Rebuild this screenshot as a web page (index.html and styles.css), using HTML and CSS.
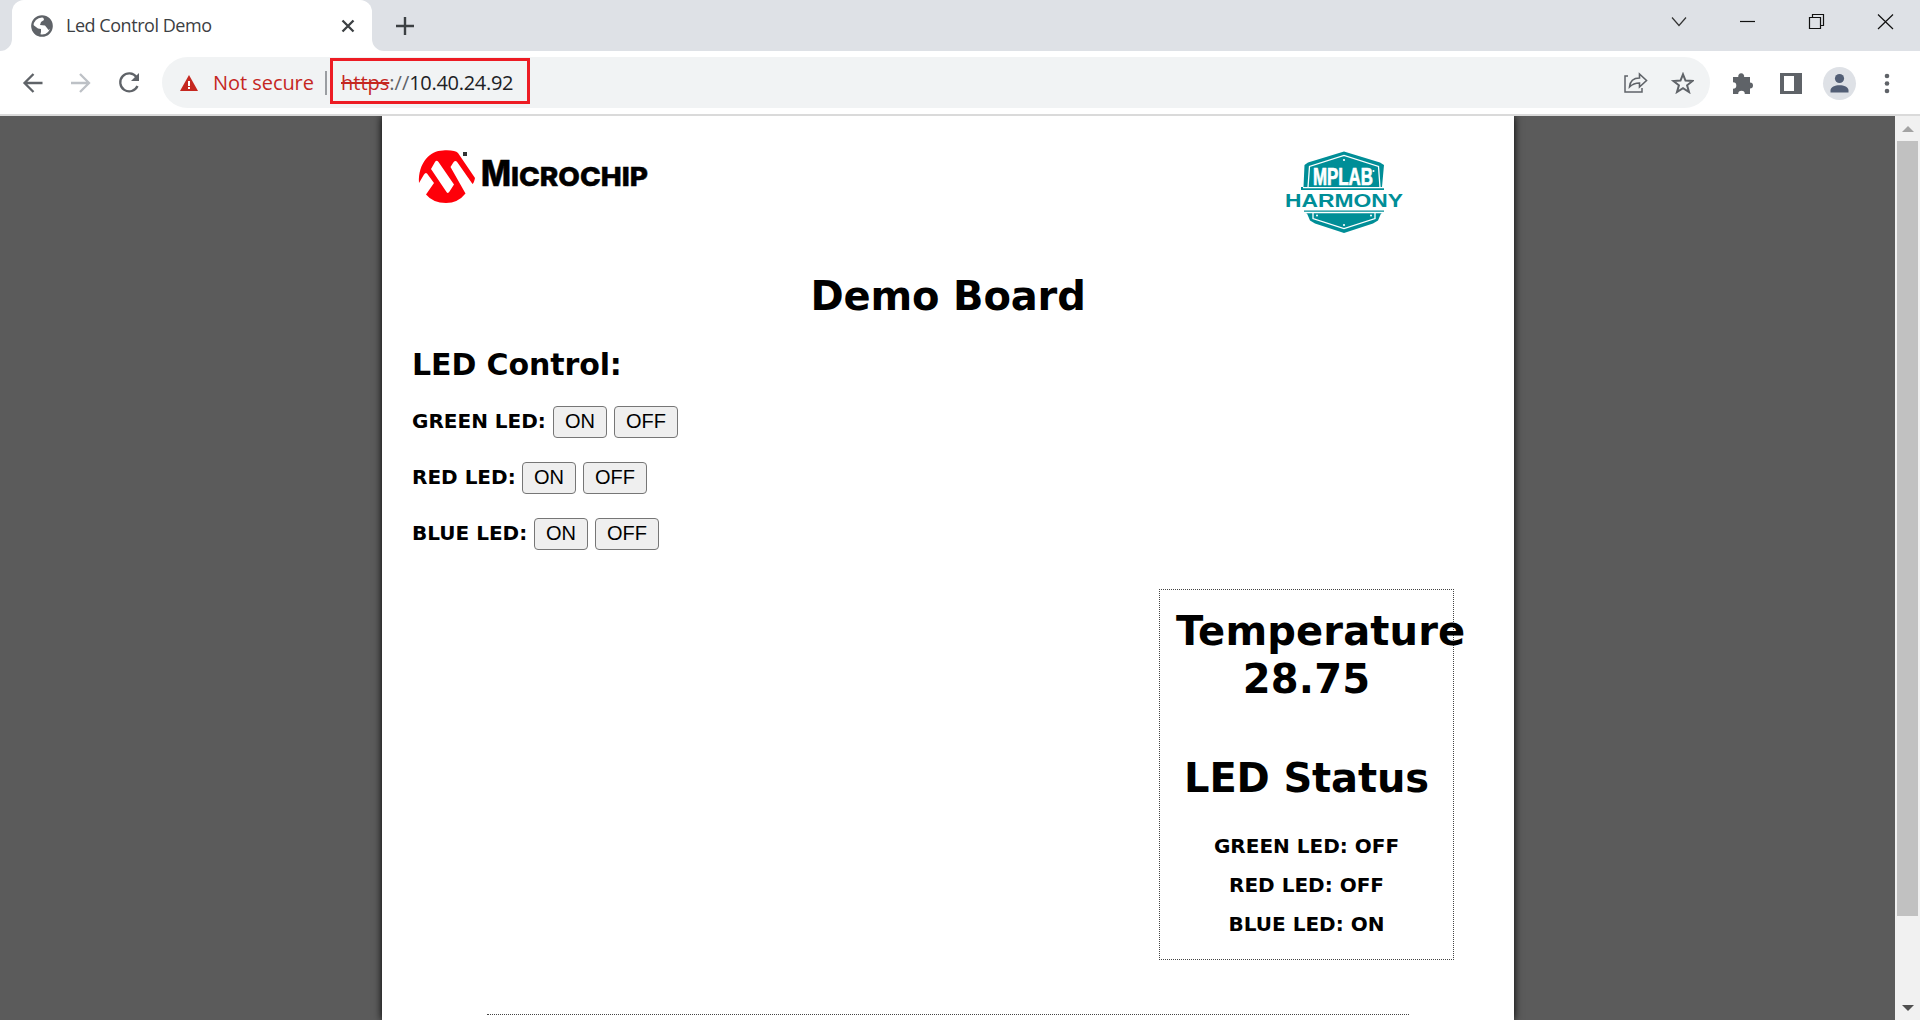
FILE: index.html
```html
<!DOCTYPE html>
<html lang="en">
<head>
<meta charset="utf-8">
<title>Led Control Demo</title>
<link rel="stylesheet" href="styles.css">
</head>
<body>
<div class="browser">
  <header class="tabstrip">
    <svg class="tab-curve left" width="12" height="12" viewBox="0 0 12 12"><path d="M12 0A12 12 0 0 1 0 12H12z" fill="#fff"/></svg>
    <div class="tab">
      <svg class="globe" width="22" height="22" viewBox="0 0 22 22"><circle cx="11" cy="11" r="9.7" fill="#fff" stroke="#5f6368" stroke-width="2.2"/><path d="M1 9 7 13.500 10 14v3l-1 4A10 10 0 0 1 1 9zM12 1.500 13 5l-3 2-1 3 5 .5 2 2.500 1.500 2 3.500-2A10 10 0 0 0 12 1.500z" fill="#5f6368"/></svg>
      <span class="tab-title">Led Control Demo</span>
      <svg class="tab-close" width="14" height="14" viewBox="0 0 14 14"><path d="M1.500 1.500l11 11M12.500 1.500l-11 11" stroke="#3c4043" stroke-width="2.300"/></svg>
    </div>
    <svg class="tab-curve" width="12" height="12" viewBox="0 0 12 12"><path d="M0 0A12 12 0 0 0 12 12H0z" fill="#fff"/></svg>
    <svg class="new-tab" width="18" height="18" viewBox="0 0 18 18"><path d="M9 0v18M0 9h18" stroke="#3c4043" stroke-width="2.400"/></svg>
    <svg class="window-buttons" width="240" height="51" viewBox="0 0 240 51" fill="none" stroke="#111" stroke-width="1.200"><path d="M12 17.500l7 8 7-8" stroke="#333"/><path d="M80 21.500h15"/><path d="M149.500 17.500h11v11h-11zM152.500 17.500v-3h11v11h-3"/><path d="M218 14.500l15 14.500M233 14.500l-15 14.500"/></svg>
  </header>
  <nav class="toolbar">
    <svg class="nav-icons" width="130" height="24" viewBox="0 0 130 24" fill="none" stroke="#5f6368" stroke-width="2.300"><path d="M20.500 12h-18M11.500 3l-9 9 9 9"/><path d="M49 12h18M58 3l9 9-9 9" stroke="#bdc1c6"/><path d="M114.500 6A9 9 0 1 0 115.500 15"/><path d="M117 2v8h-8z" fill="#5f6368" stroke="none"/></svg>
    <div class="omnibox">
      <svg class="warning" width="18" height="16" viewBox="0 0 18 16"><path d="M9 0l9 16H0z" fill="#c5271f"/><path d="M9 6v5M9 12v2" stroke="#fff" stroke-width="2"/></svg>
      <span class="not-secure">Not secure</span>
      <span class="divider"></span>
      <div class="address"><span class="scheme">https</span><span class="slashes">://</span><span class="host">10.40.24.92</span></div>
      <svg class="page-actions" width="70" height="22" viewBox="0 0 70 22" fill="none" stroke="#5f6368"><path d="M4 4H1v16h17v-4" stroke-width="1.500"/><path d="M5.500 15c.5-6 4-9 10-9V2l7 6.500-7 6.500v-4c-4 0-7 1-10 4z" stroke-width="1.600"/><path d="M59 2.300l2.500 6.300 7 .4-5.400 4.300 1.900 6.700-6-3.800-6 3.800 1.900-6.700L49.500 9l7-.4z" stroke-width="2"/></svg>
    </div>
    <svg class="tools" width="180" height="34" viewBox="0 0 180 34"><path d="M3 11h5.300a3 3 0 1 1 5.800 0H20v5.500a3 3 0 1 1 0 6V28h-5.200a3.300 3.300 0 0 0-6.600 0H3v-5.200a3.300 3.300 0 0 0 0-6.600z" fill="#5f6368"/><path d="M50 7h22v21H50zM54 10v15h10V10z" fill="#5f6368" fill-rule="evenodd"/><circle cx="109.500" cy="17.500" r="16.500" fill="#dee1e6"/><circle cx="109.500" cy="12.500" r="4.600" fill="#525e75"/><path d="M100.500 26.500v-2c0-7 18-7 18 0v2z" fill="#525e75"/><g fill="#5f6368"><circle cx="157" cy="10" r="2.300"/><circle cx="157" cy="17.500" r="2.300"/><circle cx="157" cy="25" r="2.300"/></g></svg>
  </nav>
  <div class="viewport">
    <main class="page">
      <div class="logos">
        <svg class="microchip" width="232" height="56" viewBox="417 149 232 56"><path fill-rule="evenodd" fill="#fe0009" d="M419 183C418 163 430 150.500 443 150.500C451 150 456 151 458 153L475 178Q474 183 472.500 184L457.500 162.500Q455 159.500 453 163L450.500 167L465.500 193.500Q458 203 446 203Q433 203 426 194.500L434 183L427 173.500Q425.500 172 424 174.500zM431 169L446.500 192Q448 194 449.500 191.500L454 184.500L438.500 162Q436.500 159.500 435 162z"/><path d="M463 152h4v4h-4z" fill="#333"/><text class="brand" x="481" y="186" font-size="35" textLength="30" lengthAdjust="spacingAndGlyphs">M</text><text class="brand" x="511" y="186" font-size="26" textLength="137" lengthAdjust="spacingAndGlyphs">ICROCHIP</text></svg>
        <svg class="harmony" width="120" height="84" viewBox="1284 151 120 84"><g fill="#008e97"><path d="M1344 151.500L1380 162.500L1384 165L1382 187H1384V190H1301V187H1303.500L1304.500 165L1308 162.500z"/><path d="M1304 210.500h80v2l-3 1-3 7-5 3-29 9.500-29-9.500-5-3-3-7-3-1z"/></g><g fill="none" stroke="#fff" stroke-width="1.300"><path d="M1308 187.500L1309.500 166.500L1344 155.500L1378.500 166.500L1380 187.500"/><path d="M1303 187.700H1385"/><path d="M1304 212.500H1384M1313 213v5.500l31 10 31-10v-5.500"/></g><g fill="#fff"><circle cx="1344" cy="160" r="1.100"/><circle cx="1317" cy="215.500" r="1"/><circle cx="1371" cy="215.500" r="1"/><circle cx="1344" cy="225" r="1.100"/><circle cx="1373.500" cy="171" r="1"/></g><text x="1313" y="185" class="mplab" textLength="60" lengthAdjust="spacingAndGlyphs">MPLAB</text><text x="1285" y="206.500" class="harm" textLength="118" lengthAdjust="spacingAndGlyphs">HARMONY</text></svg>
      </div>
      <h1 class="title">Demo Board</h1>
      <h2 class="subtitle">LED Control:</h2>
      <div class="led"><b>GREEN LED:</b><button>ON</button><button>OFF</button></div>
      <div class="led red"><b>RED LED:</b><button>ON</button><button>OFF</button></div>
      <div class="led blue"><b>BLUE LED:</b><button>ON</button><button>OFF</button></div>
      <section class="status">
        <h1 class="temperature">Temperature<br>28.75</h1>
        <h1 class="led-status">LED Status</h1>
        <p>GREEN LED: OFF</p><p>RED LED: OFF</p><p>BLUE LED: ON</p>
      </section>
      <div class="rule"></div>
    </main>
    <div class="scrollbar"><i class="up"></i><div class="thumb"></div><i class="down"></i></div>
  </div>
</div>
</body>
</html>
```
FILE: styles.css
```css
* { box-sizing: border-box; }
body { margin: 0; overflow: hidden; font-family: "DejaVu Sans", sans-serif; color: #000; }
svg { display: block; flex: none; }
.browser { width: 1920px; height: 1020px; display: flex; flex-direction: column; overflow: hidden; }
.tabstrip { height: 51px; flex: none; background: #dee1e6; display: flex; align-items: center; }
.tab { width: 360px; height: 51px; background: #fff; border-radius: 12px 12px 0 0; display: flex; align-items: center; padding: 0 17px 0 19px; }
.tab-title { margin-left: 13px; flex: 1; font: 18px "Open Sans", sans-serif; padding-bottom: 2px; letter-spacing: -.46px; color: #3c4043; white-space: nowrap; }
.tab-curve { align-self: flex-end; }
.new-tab { margin-left: 12px; }
.window-buttons { margin-left: auto; margin-right: 20px; }
.toolbar { height: 65px; flex: none; background: #fff; border-bottom: 2px solid #dadada; display: flex; align-items: center; }
.nav-icons { margin-left: 22px; }
.omnibox { margin-left: 10px; width: 1548px; height: 51px; border-radius: 26px; background: #f1f3f4; display: flex; align-items: center; font: 20px "Open Sans", sans-serif; }
.warning { margin-left: 18px; }
.not-secure { margin-left: 15px; width: 112px; color: #c5271f; letter-spacing: -.05px; white-space: nowrap; }
.divider { width: 2px; height: 24px; background: #9a9da1; }
.address { margin: 0 0 3px 3px; width: 200px; height: 46px; border: 3px solid #ed1c24; display: flex; align-items: center; padding: 3px 0 0 8px; color: #202124; }
.scheme { color: #c5271f; text-decoration: line-through; }
.slashes { color: #5f6368; }
.host { letter-spacing: -.3px; }
.page-actions { margin-left: auto; margin-right: 16px; }
.tools { margin-left: 20px; }
.viewport { flex: 1; display: flex; background: #5b5b5b; overflow: hidden; }
.page { width: 1132px; margin-left: 382px; height: 904px; background: #fff; box-shadow: 0 0 8px #000; padding: 33px 30px 0; }
.logos { display: flex; justify-content: space-between; padding: 0 80px 0 5px; height: 118px; }
.harmony { margin-top: 2px; }
.brand { font-family: Inter, sans-serif; font-weight: 800; fill: #000; stroke: #000; stroke-width: .5px; }
.mplab { font: bold 23px "Liberation Sans", sans-serif; fill: #fff; stroke: #fff; stroke-width: .7px; }
.harm { font: bold 19px "Liberation Sans", sans-serif; fill: #008e97; }
h1 { font-size: 40px; line-height: 48px; margin: 0; text-align: center; }
.title { margin-top: 5px; letter-spacing: -.15px; }
.subtitle { font-size: 30px; line-height: 36px; margin: 27px 0 0; letter-spacing: -.1px; }
.led { display: flex; align-items: center; height: 32px; margin-top: 24px; font-size: 20px; }
.subtitle + .led { margin-top: 23px; }
.led b { width: 141px; padding-bottom: 2px; white-space: nowrap; }
.red b { width: 110px; }
.blue b { width: 122px; }
button { height: 32px; width: 54px; padding: 0 0 2px; margin-right: 7px; border: 1px solid #767676; border-radius: 4px; background: #efefef; font: 20px "Liberation Sans", sans-serif; color: #000; }
button + button { width: 64px; }
.status { margin: 39px 0 0 747px; width: 295px; height: 371px; border: 1px dotted #444; padding: 17px 16px 0; text-align: center; font-weight: bold; font-size: 20px; }
.temperature { letter-spacing: .15px; }
.led-status { margin-top: 51px; margin-bottom: 25px; letter-spacing: -.15px; white-space: nowrap; }
.status p { margin: 0; line-height: 39px; white-space: nowrap; }
.rule { width: 922px; margin: 54px 0 0 75px; border-top: 1px dotted #444; }
.scrollbar { margin-left: auto; width: 25px; background: #f1f1f1; display: flex; flex-direction: column; align-items: center; }
.thumb { width: 21px; height: 775px; margin-top: 9px; background: #c1c1c1; }
.up { margin-top: 10px; border: 6px solid transparent; border-top: 0; border-bottom-color: #a3a3a3; }
.down { margin-top: 89px; border: 6px solid transparent; border-bottom: 0; border-top-color: #505050; }
```
